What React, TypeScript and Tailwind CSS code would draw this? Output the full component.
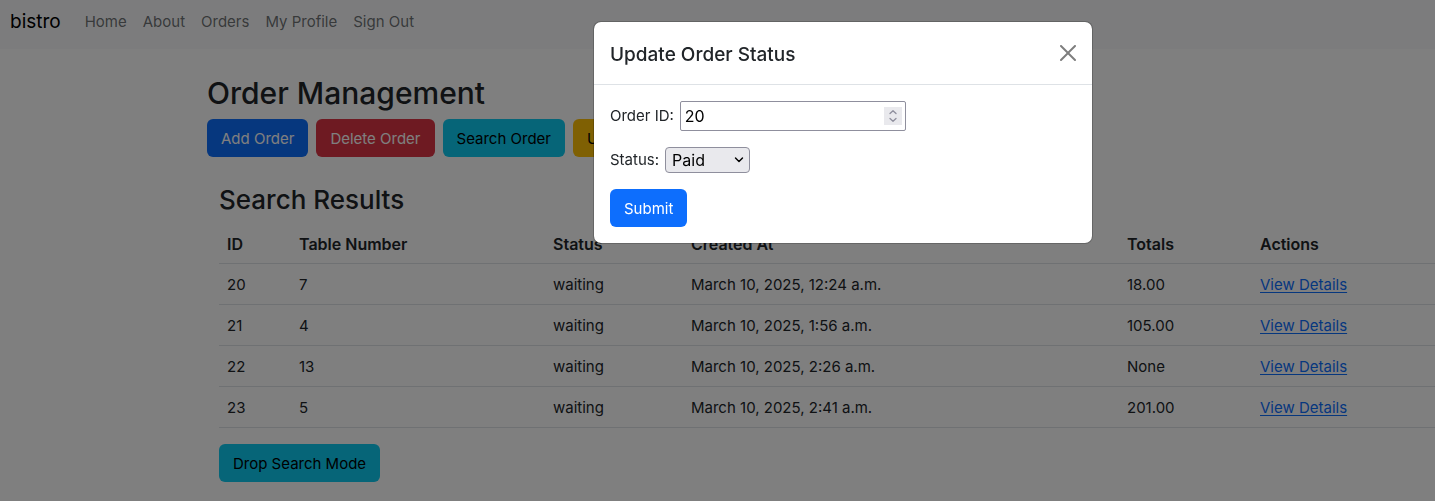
import React, { useState } from "react";

const navLinks = ["Home", "About", "Orders", "My Profile", "Sign Out"];

const orders = [
  { id: 20, table: 7, status: "waiting", created: "March 10, 2025, 12:24 a.m.", total: "18.00" },
  { id: 21, table: 4, status: "waiting", created: "March 10, 2025, 1:56 a.m.", total: "105.00" },
  { id: 22, table: 13, status: "waiting", created: "March 10, 2025, 2:26 a.m.", total: "None" },
  { id: 23, table: 5, status: "waiting", created: "March 10, 2025, 2:41 a.m.", total: "201.00" },
];

function Button({
  className,
  type = "button",
  children,
}: {
  className: string;
  type?: "button" | "submit";
  children: React.ReactNode;
}) {
  return (
    <button type={type} className={`h-[38px] whitespace-nowrap rounded-md px-3.5 pt-0.5 ${className}`}>
      {children}
    </button>
  );
}

function Navbar() {
  return (
    <nav className="flex items-center bg-[#f8f9fa] pt-0.5 pb-[7px] pl-2.5">
      <a href="#" className="mr-4 text-[19px] leading-[30px] text-black">
        bistro
      </a>
      <ul className="flex">
        {navLinks.map((label) => (
          <li key={label}>
            <a href="#" className="block px-2 py-2 text-[#212529]/65">
              {label}
            </a>
          </li>
        ))}
      </ul>
    </nav>
  );
}

function OrdersTable() {
  return (
    <table className="mb-4 w-full table-fixed border-separate border-spacing-0 text-left">
      <colgroup>
        <col className="w-[72px]" />
        <col className="w-[254px]" />
        <col className="w-[138px]" />
        <col className="w-[436px]" />
        <col className="w-[133px]" />
        <col />
      </colgroup>
      <thead>
        <tr>
          {["ID", "Table Number", "Status", "Created At", "Totals", "Actions"].map((heading) => (
            <th
              key={heading}
              scope="col"
              className="border-b border-[#dee2e6] px-2 pt-[9px] pb-[7px] text-base leading-6 font-semibold"
            >
              {heading}
            </th>
          ))}
        </tr>
      </thead>
      <tbody className="[&_td]:border-b [&_td]:border-[#dee2e6] [&_td]:px-2 [&_td]:pt-[9px] [&_td]:pb-[7px]">
        {orders.map((order) => (
          <tr key={order.id}>
            <td>{order.id}</td>
            <td>{order.table}</td>
            <td>{order.status}</td>
            <td>{order.created}</td>
            <td>{order.total}</td>
            <td>
              <a href="#" className="text-[#0d6efd] underline underline-offset-2">
                View Details
              </a>
            </td>
          </tr>
        ))}
      </tbody>
    </table>
  );
}

function UpdateStatusModal() {
  const [orderId, setOrderId] = useState("20");
  const [status, setStatus] = useState("Paid");
  return (
    <div className="fixed inset-0 flex items-start justify-center bg-black/50 pt-[21px] pl-[251px]">
      <div
        role="dialog"
        aria-labelledby="modal-title"
        className="w-[500px] rounded-lg border border-black/20 bg-white bg-clip-padding"
      >
        <div className="flex items-center justify-between border-b border-[#dee2e6] p-4">
          <h5 id="modal-title" className="pt-1 text-[19px] leading-[26px] font-medium">
            Update Order Status
          </h5>
          <button type="button" aria-label="Close" className="opacity-50">
            <svg viewBox="0 0 16 16" className="size-4" fill="#000">
              <path d="M.293.293a1 1 0 0 1 1.414 0L8 6.586 14.293.293a1 1 0 1 1 1.414 1.414L9.414 8l6.293 6.293a1 1 0 0 1-1.414 1.414L8 9.414l-6.293 6.293a1 1 0 0 1-1.414-1.414L6.586 8 .293 1.707a1 1 0 0 1 0-1.414z" />
            </svg>
          </button>
        </div>
        <form className="flex flex-col items-start gap-4 p-4" onSubmit={(e) => e.preventDefault()}>
          <div className="flex items-center gap-1.5">
            <label htmlFor="order-id">Order ID:</label>
            <div className="relative">
              <input
                id="order-id"
                type="number"
                value={orderId}
                onChange={(e) => setOrderId(e.target.value)}
                className="block h-[30px] w-[226px] rounded-xs border border-[#8f8f9d] bg-white px-1 text-base text-black [appearance:textfield] [&::-webkit-inner-spin-button]:appearance-none"
              />
              <svg viewBox="0 0 18 18" className="pointer-events-none absolute top-1.5 right-1 size-[18px]">
                <rect width="18" height="18" fill="#e9e9ed" />
                <path
                  d="M6 6.600 9 3.800l3 2.800M6 11.400l3 2.800 3-2.800"
                  fill="none"
                  stroke="#8f8f9d"
                  strokeWidth="1.3"
                  strokeLinecap="round"
                  strokeLinejoin="round"
                />
              </svg>
            </div>
          </div>
          <div className="flex items-center gap-1.5">
            <label htmlFor="status">Status:</label>
            <div className="relative">
              <select
                id="status"
                value={status}
                onChange={(e) => setStatus(e.target.value)}
                className="block h-[26px] w-[85px] appearance-none rounded border border-[#8f8f9d] bg-[#e9e9ed] pl-1.5 text-base text-black"
              >
                <option>Waiting</option>
                <option>Ready</option>
                <option>Paid</option>
              </select>
              <svg viewBox="0 0 10 6" className="pointer-events-none absolute top-2.5 right-1.5 h-1.5 w-2.5">
                <path
                  d="m1.500 1 3.500 3.600L8.500 1"
                  fill="none"
                  stroke="#000"
                  strokeWidth="1.4"
                  strokeLinecap="round"
                  strokeLinejoin="round"
                />
              </svg>
            </div>
          </div>
          <Button type="submit" className="bg-[#0d6efd] text-white">
            Submit
          </Button>
        </form>
      </div>
    </div>
  );
}

export default function App() {
  return (
    <div className="min-h-screen bg-white font-[Inter,sans-serif] text-[15px] leading-6 text-[#212529]">
      <Navbar />
      <main className="pt-[25px] pl-[207px]">
        <h2 className="mb-[7px] text-[30px] leading-[38px] font-medium">Order Management</h2>
        <div className="flex gap-2">
          <Button className="bg-[#0d6efd] text-white">Add Order</Button>
          <Button className="bg-[#dc3545] text-white">Delete Order</Button>
          <Button className="bg-[#0dcaf0] text-black">Search Order</Button>
          <Button className="bg-[#ffc107] text-black">Update Status</Button>
        </div>
        <section className="pt-[26px] pl-3">
          <h3 className="mb-1.5 text-[26px] leading-[34px] font-medium">Search Results</h3>
          <OrdersTable />
          <Button className="bg-[#0dcaf0] text-black">Drop Search Mode</Button>
        </section>
      </main>
      <UpdateStatusModal />
    </div>
  );
}
